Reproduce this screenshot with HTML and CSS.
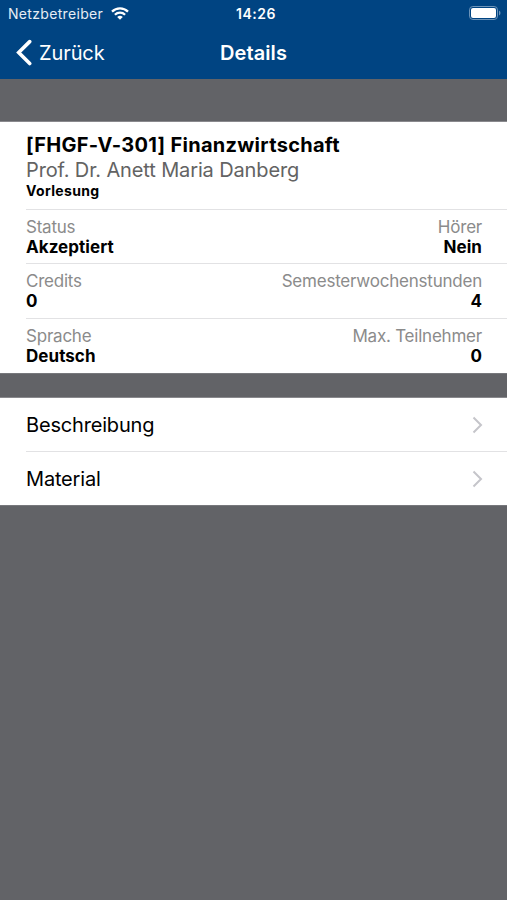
FILE: index.html
```html
<!DOCTYPE html>
<html lang="de">
<head>
<meta charset="utf-8">
<title>Details</title>
<link rel="stylesheet" href="styles.css">
</head>
<body>
<header class="header">
  <div class="statusbar">
    <div class="carrier"><span class="t carrier-name">Netzbetreiber</span>
      <svg class="wifi" width="18" height="13" viewBox="0 0 18 13" fill="none" stroke="#fff" stroke-width="2.3"><path d="M1 4.6a11.5 11.5 0 0 1 16 0M3.900 7.700a7.300 7.300 0 0 1 10.200 0"/><path d="M9 12.800 6.200 10a4 4 0 0 1 5.600 0z" fill="#fff" stroke="none"/></svg>
    </div>
    <span class="t time">14:26</span>
    <svg class="battery" width="32" height="14" viewBox="0 0 32 14"><rect x=".5" y=".5" width="28" height="13" rx="3.4" fill="none" stroke="#6d94b9"/><rect x="2" y="2" width="25" height="10" rx="2" fill="#fff"/><path d="M30 4.500q1.500.8 1.500 2.500T30 9.500z" fill="#6d94b9"/></svg>
  </div>
  <nav class="navbar">
    <a class="back"><svg width="16" height="28" viewBox="0 0 16 28"><path d="M13.700 2.600 2.700 13.500l11 11" fill="none" stroke="#fff" stroke-width="3.6" stroke-linecap="round"/></svg><span class="t">Zurück</span></a>
    <h1 class="t title">Details</h1>
    <span></span>
  </nav>
</header>
<main>
  <section class="card course">
    <div class="intro">
      <h2 class="t course-name">[FHGF-V-301] Finanzwirtschaft</h2>
      <p class="t teacher">Prof. Dr. Anett Maria Danberg</p>
      <p class="t kind">Vorlesung</p>
    </div>
    <dl class="row"><div><dt class="t">Status</dt><dd class="t">Akzeptiert</dd></div><div class="right"><dt class="t">Hörer</dt><dd class="t">Nein</dd></div></dl>
    <dl class="row"><div><dt class="t">Credits</dt><dd class="t">0</dd></div><div class="right"><dt class="t">Semesterwochenstunden</dt><dd class="t">4</dd></div></dl>
    <dl class="row"><div><dt class="t">Sprache</dt><dd class="t">Deutsch</dd></div><div class="right"><dt class="t">Max. Teilnehmer</dt><dd class="t">0</dd></div></dl>
  </section>
  <section class="card links">
    <a class="link"><span class="t">Beschreibung</span><svg width="11" height="18" viewBox="0 0 11 18"><path d="m1.500 1.500 7.500 7.500-7.500 7.500" fill="none" stroke="#c5c5ca" stroke-width="2"/></svg></a>
    <a class="link"><span class="t">Material</span><svg width="11" height="18" viewBox="0 0 11 18"><path d="m1.500 1.500 7.500 7.500-7.500 7.500" fill="none" stroke="#c5c5ca" stroke-width="2"/></svg></a>
  </section>
</main>
</body>
</html>
```
FILE: styles.css
```css
* { box-sizing: border-box; margin: 0; padding: 0; }
body { min-height: 900px; background: #626367; color: #000; font-family: Inter, "Liberation Sans", sans-serif; }
.t { white-space: nowrap; }
.header { height: 79px; background: #004482; color: #fff; }
.statusbar { display: grid; grid-template-columns: 1fr auto 1fr; align-items: center; height: 27px; padding: 0 6px 0 8px; }
.carrier { display: flex; align-items: center; gap: 8px; }
.carrier-name { font-size: 14px; letter-spacing: .32px; color: #e6edf4; }
.time { font-weight: 600; font-size: 14px; letter-spacing: .5px; margin-left: 3px; }
.battery { justify-self: end; margin-top: -1px; }
.navbar { display: grid; grid-template-columns: 1fr auto 1fr; align-items: center; height: 51px; padding: 0 16px; }
.back { display: flex; align-items: center; gap: 7px; font-size: 20px; letter-spacing: -.1px; }
.title { font-size: 20px; font-weight: 600; letter-spacing: .1px; }
.card { background: #fff; box-shadow: 0 -1px #89898d, 0 1px #77787c; }
.course { height: 251px; margin-top: 43px; }
.intro { height: 87px; padding: 10px 26px 0; }
.course-name { font-size: 20px; line-height: 26px; font-weight: 700; letter-spacing: .3px; }
.teacher { font-size: 20px; line-height: 25px; letter-spacing: -.13px; color: #636363; }
.kind { font-size: 14px; line-height: 16px; font-weight: 700; letter-spacing: .35px; }
.row { display: flex; justify-content: space-between; height: 54px; margin-left: 26px; padding: 7px 25px 0 0; border-top: 1px solid #e2e2e4; }
.row + .row { height: 55px; }
.right { text-align: right; }
dt { font-size: 17px; line-height: 20px; letter-spacing: -.22px; color: #8b8b8b; }
dd { font-size: 17px; line-height: 21px; font-weight: 700; letter-spacing: .05px; }
.links { height: 107px; margin-top: 25px; }
.link { display: flex; align-items: center; justify-content: space-between; height: 53px; margin-left: 26px; padding-right: 24px; font-size: 20px; letter-spacing: -.18px; }
.link + .link { height: 54px; border-top: 1px solid #e2e2e4; }
```
